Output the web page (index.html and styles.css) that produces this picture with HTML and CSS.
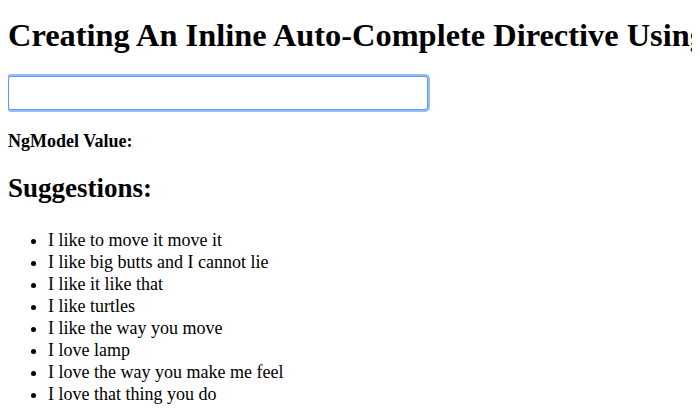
FILE: index.html
```html
<!DOCTYPE html>
<html lang="en">
  <head>
    <meta charset="UTF-8" />
    <title>Creating An Inline Auto-Complete Directive Using AngularJS</title>
    <link rel="stylesheet" href="styles.css">
  </head>
  <body>
    <h1 class="title">Creating An Inline Auto-Complete Directive Using AngularJS</h1>

    <form class="search">
      <input type="text" class="search-input" />
    </form>

    <p class="model">
      <strong>NgModel Value:</strong>
    </p>

    <h2 class="subtitle">Suggestions:</h2>

    <ul class="suggestions">
      <li>I like to move it move it</li>
      <li>I like big butts and I cannot lie</li>
      <li>I like it like that</li>
      <li>I like turtles</li>
      <li>I like the way you move</li>
      <li>I love lamp</li>
      <li>I love the way you make me feel</li>
      <li>I love that thing you do</li>
    </ul>
  </body>
</html>
```

FILE: styles.css
```css
html,
body {
  overflow: hidden;
}

body {
  margin: 8px;
  font-family: "Liberation Serif", "Times New Roman", serif;
  font-size: 18px;
  color: #000;
  background-color: #fff;
}

.title {
  font-size: 32.4px;
  line-height: 37px;
  margin: 9px 0 0;
  white-space: nowrap;
}

.search {
  margin: 22px 0 0;
}

.search-input {
  box-sizing: border-box;
  width: 420px;
  height: 34px;
  margin: 0;
  padding: 2px 6px;
  font-size: 18px;
  border: 1px solid #5b9ae8;
  border-radius: 3px;
  outline: none;
  box-shadow: 0 0 0 2px rgba(112, 168, 250, 0.75);
}

.model {
  margin: 21px 0 0;
}

.subtitle {
  font-size: 27px;
  margin: 21px 0 0;
}

.suggestions {
  margin: 25px 0 0;
  padding-left: 40px;
}

.suggestions li {
  line-height: 22px;
}
```
